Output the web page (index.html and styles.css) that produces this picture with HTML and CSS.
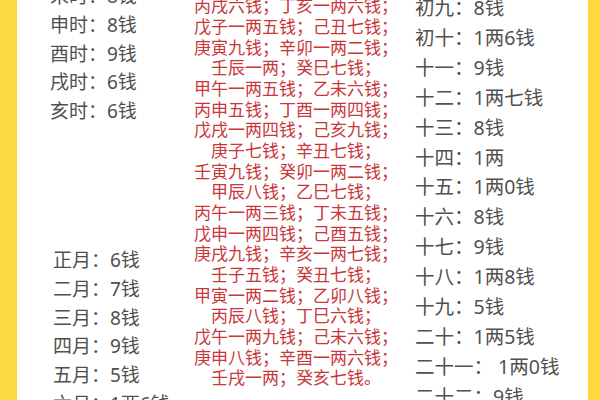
FILE: index.html
```html
<!DOCTYPE html>
<html lang="zh">
<head>
<meta charset="utf-8">
<link rel="stylesheet" href="styles.css">
</head>
<body>
<div class="page">
  <div class="edge edge-left"></div>
  <div class="sheet">
    <div class="col col-left">
      <div class="group hours">
        <div class="row">未时：8钱</div>
        <div class="row">申时：8钱</div>
        <div class="row">酉时：9钱</div>
        <div class="row">戌时：6钱</div>
        <div class="row">亥时：6钱</div>
      </div>
      <div class="group months">
        <div class="row">正月：6钱</div>
        <div class="row">二月：7钱</div>
        <div class="row">三月：8钱</div>
        <div class="row">四月：9钱</div>
        <div class="row">五月：5钱</div>
        <div class="row">六月：1两6钱</div>
      </div>
    </div>
    <div class="col col-mid">
      <div class="line">丙戌六钱；丁亥一两六钱；</div>
      <div class="line">戊子一两五钱；己丑七钱；</div>
      <div class="line">庚寅九钱；辛卯一两二钱；</div>
      <div class="line">壬辰一两；癸巳七钱；</div>
      <div class="line">甲午一两五钱；乙未六钱；</div>
      <div class="line">丙申五钱；丁酉一两四钱；</div>
      <div class="line">戊戌一两四钱；己亥九钱；</div>
      <div class="line">庚子七钱；辛丑七钱；</div>
      <div class="line">壬寅九钱；癸卯一两二钱；</div>
      <div class="line">甲辰八钱；乙巳七钱；</div>
      <div class="line">丙午一两三钱；丁未五钱；</div>
      <div class="line">戊申一两四钱；己酉五钱；</div>
      <div class="line">庚戌九钱；辛亥一两七钱；</div>
      <div class="line">壬子五钱；癸丑七钱；</div>
      <div class="line">甲寅一两二钱；乙卯八钱；</div>
      <div class="line">丙辰八钱；丁巳六钱；</div>
      <div class="line">戊午一两九钱；己未六钱；</div>
      <div class="line">庚申八钱；辛酉一两六钱；</div>
      <div class="line">壬戌一两；癸亥七钱。</div>
    </div>
    <div class="col col-right">
      <div class="row">初九：8钱</div>
      <div class="row">初十：1两6钱</div>
      <div class="row">十一：9钱</div>
      <div class="row">十二：1两七钱</div>
      <div class="row">十三：8钱</div>
      <div class="row">十四：1两</div>
      <div class="row">十五：1两0钱</div>
      <div class="row">十六：8钱</div>
      <div class="row">十七：9钱</div>
      <div class="row">十八：1两8钱</div>
      <div class="row">十九：5钱</div>
      <div class="row">二十：1两5钱</div>
      <div class="row">二十一：&nbsp;1两0钱</div>
      <div class="row">二十二：9钱</div>
    </div>
  </div>
  <div class="edge edge-right"></div>
</div>
</body>
</html>
```

FILE: styles.css
```css
html, body {
  margin: 0;
  padding: 0;
  background: #ffffff;
}
.page {
  width: 600px;
  height: 400px;
  overflow: hidden;
  display: flex;
  font-family: "Noto Sans", "Noto Sans CJK SC", sans-serif;
}
.edge {
  flex: none;
  background: #fcd940;
}
.edge-left {
  width: 17px;
}
.edge-right {
  width: 12px;
}
.sheet {
  flex: 1;
  display: flex;
  background: #ffffff;
  overflow: hidden;
}
.col {
  flex: none;
}
.col-left {
  width: 173px;
  padding-left: 33px;
  box-sizing: border-box;
  color: #505050;
  font-size: 19px;
}
.row {
  line-height: 28.8px;
  white-space: nowrap;
}
.hours {
  margin-top: -18px;
}
.months {
  margin-top: 120px;
  padding-left: 3px;
}
.col-mid {
  width: 212px;
  margin-top: -3.6px;
  text-align: center;
  color: #c9373b;
  font-size: 17px;
}
.line {
  line-height: 20.65px;
  white-space: nowrap;
}
.col-right {
  padding-left: 13px;
  margin-top: -7px;
  color: #505050;
  font-size: 19.5px;
}
.col-right .row {
  line-height: 29.9px;
}
```
